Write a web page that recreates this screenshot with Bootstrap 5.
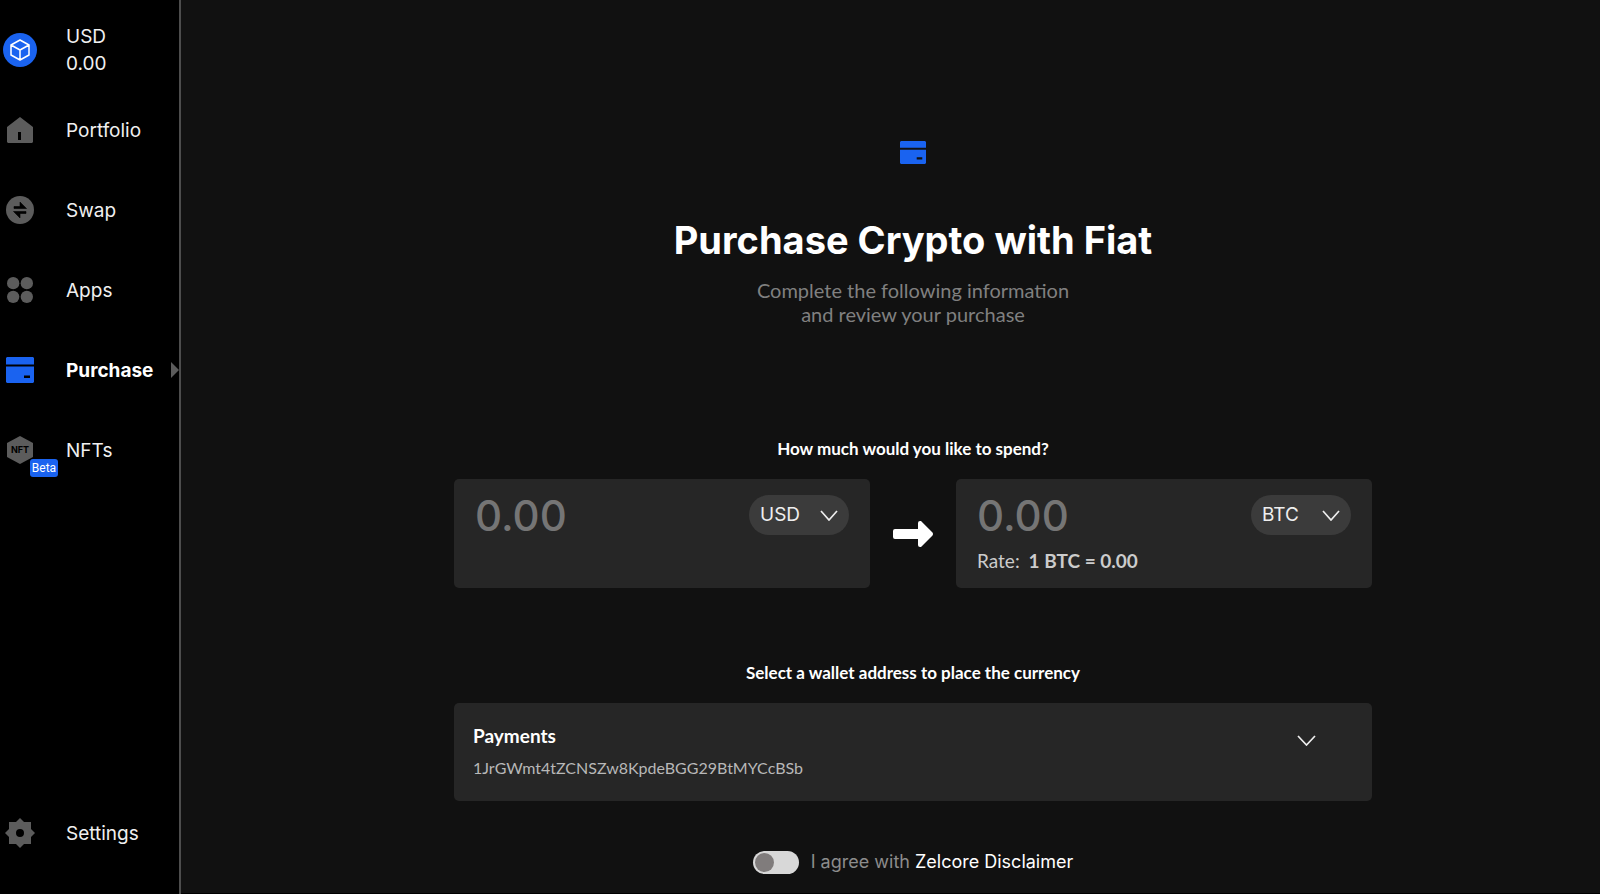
<!DOCTYPE html>
<html lang="en">
<head>
<meta charset="utf-8">
<meta name="viewport" content="width=device-width, initial-scale=1">
<title>Purchase Crypto with Fiat</title>
<link href="https://cdn.jsdelivr.net/npm/bootstrap@5.3.0/dist/css/bootstrap.min.css" rel="stylesheet">
<style>
  :root { --accent: #1a63f0; --panel: #262626; --muted: #5c5c5c; }
  body { background: #111; color: #fff; font-family: Inter, sans-serif; font-size: 18px; }
  .humanist { font-family: Lato, sans-serif; }
  .sidebar { flex: 0 0 181px; background: #000; border-right: 2px solid #4d4d4d; padding: 10px 0 21px; font-size: 19px; }
  .side-item { height: 80px; line-height: 27px; color: #f0f0f0; text-decoration: none; position: relative; }
  .side-icon { width: 40px; margin-right: 26px; flex: none; color: var(--muted); position: relative; }
  .side-icon svg { display: block; margin: 0 auto; }
  .side-item.active { font-weight: 700; color: #fff; }
  .side-item.active .side-icon { color: var(--accent); }
  .side-item.active::after { content: ""; margin-left: auto; border: 8px solid transparent; border-left-color: #5c5c5c; border-right: 0; }
  .beta { position: absolute; left: 30px; top: 23px; background: var(--accent); border-radius: 3px; font-size: 12px; font-weight: 400; line-height: 18px; width: 28px; text-align: center; color: #fff; font-family: Roboto, sans-serif; }
  .stage { padding: 141px 24px 0 69px; border-bottom: 1px solid #000; }
  .flow { max-width: 918px; }
  .page-title { font-size: 38px; font-weight: 700; line-height: 44px; margin: 54px 0 16px; }
  .sub { font-size: 20px; line-height: 24px; color: #808080; margin-bottom: 111px; }
  .question { font-size: 17px; line-height: 24px; font-weight: 700; margin-bottom: 18px; }
  .question-wallet { margin-top: 73px; }
  .panel { background: var(--panel); border-radius: 5px; }
  .amount-panel { flex: 1 1 0; min-width: 0; min-height: 109px; padding: 16px 21px 14px; }
  .arrow { margin: 0 23px; }
  .amount { flex: 1 1 0; background: none; border: 0; outline: 0; color: #fff; font-size: 42px; line-height: 40px; height: 40px; font-weight: 500; padding: 0; min-width: 0; }
  .amount::placeholder { color: #757575; opacity: 1; }
  .pill { position: relative; flex: none; }
  .pill select { display: block; appearance: none; width: 100px; height: 40px; border: 0; border-radius: 20px; background: #3b3b3b; color: #eee; padding: 0 36px 0 11px; font-size: 19px; }
  .pill svg { position: absolute; right: 11px; top: 15px; pointer-events: none; }
  .rate { font-size: 19px; line-height: 24px; color: #ccc; margin-top: 14px; }
  .wallet { color: #fff; border: 0; height: 98px; padding: 0 56px 0 19px; }
  .wallet-name { font-size: 19px; line-height: 24px; font-weight: 700; }
  .wallet-address { font-size: 16px; line-height: 24px; color: #b8b8b8; margin-top: 8px; }
  .switch { appearance: none; width: 46px; height: 23px; margin: 0 12px 0 0; border-radius: 12px; background: #d8d8d8; display: flex; align-items: center; padding: 2px; cursor: pointer; }
  .switch::before { content: ""; width: 19px; height: 19px; border-radius: 50%; background: #807c7c; }
  .switch:checked::before { margin-left: auto; background: var(--accent); }
  .agree { margin-top: 49px; color: #8c8c8c; line-height: 24px; }
</style>
</head>
<body>
<div class="d-flex min-vh-100">
  <nav class="sidebar d-flex flex-column" aria-label="Main">
    <a href="#" class="side-item d-flex align-items-center">
      <span class="side-icon"><svg width="34" height="34" viewBox="0 0 34 34"><circle cx="17" cy="17" r="17" fill="#1a63f0"/><path d="M17 7l9 5v10l-9 5-9-5V12zM8 12l9 5 9-5M17 17v10" fill="none" stroke="#fff" stroke-width="1.5" stroke-linejoin="round"/></svg></span>
      <span>USD<br>0.00</span>
    </a>
    <a href="#" class="side-item d-flex align-items-center">
      <span class="side-icon"><svg width="26" height="26" viewBox="0 0 26 26"><path fill="currentColor" fill-rule="evenodd" d="M13 0l13 10v15l-1 1H1l-1-1V10zM11 15v8h3v-8z"/></svg></span>
      Portfolio
    </a>
    <a href="#" class="side-item d-flex align-items-center">
      <span class="side-icon"><svg width="28" height="28" viewBox="0 0 28 28"><circle cx="14" cy="14" r="14" fill="currentColor"/><path d="M8 10.500h6V6l6.500 6.500H8zM20 17.500h-6V22l-6.500-6.500H20z" stroke="#000" stroke-width=".6"/></svg></span>
      Swap
    </a>
    <a href="#" class="side-item d-flex align-items-center">
      <span class="side-icon"><svg width="26" height="26" viewBox="0 0 27 27" fill="currentColor"><circle cx="6.400" cy="6.400" r="6.400"/><circle cx="20.600" cy="6.400" r="6.400"/><circle cx="6.400" cy="20.600" r="6.400"/><circle cx="20.600" cy="20.600" r="6.400"/></svg></span>
      Apps
    </a>
    <a href="#" class="side-item active d-flex align-items-center" aria-current="page">
      <span class="side-icon"><svg width="28" height="26" viewBox="0 0 28 26"><path fill="currentColor" fill-rule="evenodd" d="M1 0h26l1 1v6.500H0V1zM0 9.500h28V25l-1 1H1l-1-1zM18 18.500v2.500h6v-2.500z"/></svg></span>
      Purchase
    </a>
    <a href="#" class="side-item d-flex align-items-center">
      <span class="side-icon"><svg width="26" height="28" viewBox="0 0 26 28"><path fill="currentColor" d="M13 0l13 7v14l-13 7-13-7V7z"/><text x="13" y="17" text-anchor="middle" font-size="9" font-weight="700" font-family="Inter, sans-serif">NFT</text></svg><span class="beta">Beta</span></span>
      NFTs
    </a>
    <a href="#" class="side-item d-flex align-items-center mt-auto">
      <span class="side-icon"><svg width="30" height="30" viewBox="0 0 30 30"><path fill="currentColor" fill-rule="evenodd" d="M15 0l4 4h7v7l4 4-4 4v7h-7l-4 4-4-4H4v-7l-4-4 4-4V4h7zM15 11a4 4 0 1 0 0 8 4 4 0 1 0 0-8z"/></svg></span>
      Settings
    </a>
  </nav>

  <main class="stage flex-grow-1">
    <form class="flow mx-auto">
      <header class="text-center">
        <svg class="d-block mx-auto" width="26" height="23" viewBox="0 0 28 26" preserveAspectRatio="none"><path fill="#1a63f0" fill-rule="evenodd" d="M1 0h26l1 1v6.500H0V1zM0 10h28v15l-1 1H1l-1-1zM18 18.500v2.500h6v-2.500z"/></svg>
        <h1 class="page-title">Purchase Crypto with Fiat</h1>
        <p class="sub humanist">Complete the following information<br>and review your purchase</p>
      </header>

      <h2 class="question humanist text-center">How much would you like to spend?</h2>
      <div class="d-flex">
        <div class="panel amount-panel">
          <div class="d-flex justify-content-between">
            <input class="amount" type="text" inputmode="decimal" placeholder="0.00" aria-label="Amount to spend">
            <span class="pill"><select aria-label="Fiat currency"><option>USD</option></select><svg width="18" height="11" viewBox="0 0 18 11"><path d="M1 1l8 9 8-9" fill="none" stroke="#eee" stroke-width="1.700"/></svg></span>
          </div>
        </div>
        <svg class="arrow flex-shrink-0 align-self-center" width="40" height="26" viewBox="0 0 40 26"><path fill="#fff" d="M2 8h23V2q0-2 2-2h1l11.500 11.500q1 1.500 0 3L28 26h-1q-2 0-2-2v-6H2q-2 0-2-2v-6q0-2 2-2z"/></svg>
        <div class="panel amount-panel">
          <div class="d-flex justify-content-between">
            <input class="amount" type="text" inputmode="decimal" placeholder="0.00" aria-label="Amount to receive">
            <span class="pill"><select aria-label="Crypto currency"><option>BTC</option></select><svg width="18" height="11" viewBox="0 0 18 11"><path d="M1 1l8 9 8-9" fill="none" stroke="#eee" stroke-width="1.700"/></svg></span>
          </div>
          <div class="rate humanist">Rate: <strong class="ms-1">1 BTC = 0.00</strong></div>
        </div>
      </div>

      <h2 class="question question-wallet humanist text-center">Select a wallet address to place the currency</h2>
      <button type="button" class="wallet panel humanist w-100 d-flex align-items-center justify-content-between text-start">
        <span><span class="wallet-name d-block">Payments</span><span class="wallet-address d-block">1JrGWmt4tZCNSZw8KpdeBGG29BtMYCcBSb</span></span>
        <svg class="mb-4" width="19" height="11" viewBox="0 0 19 11"><path d="M1 1l8.500 9L18 1" fill="none" stroke="#eee" stroke-width="1.700"/></svg>
      </button>

      <div class="agree d-flex align-items-center justify-content-center">
        <input class="switch" type="checkbox" role="switch" id="agree">
        <label for="agree">I agree with <a href="#" class="text-white text-decoration-none">Zelcore Disclaimer</a></label>
      </div>
    </form>
  </main>
</div>
<script src="https://cdn.jsdelivr.net/npm/bootstrap@5.3.0/dist/js/bootstrap.bundle.min.js"></script>
</body>
</html>
